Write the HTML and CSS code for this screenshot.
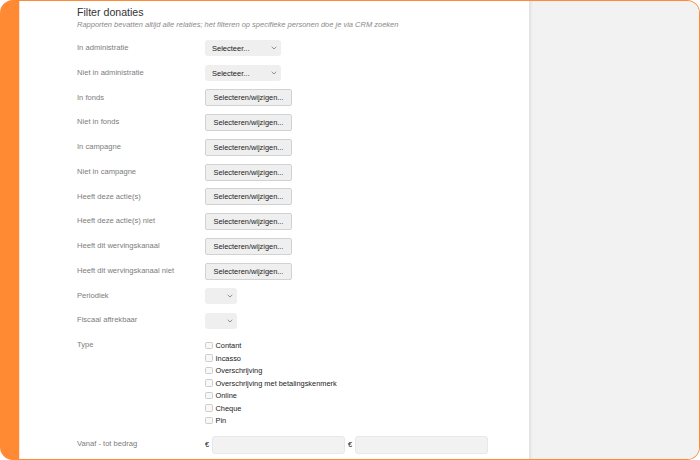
FILE: index.html
```html
<!DOCTYPE html>
<html lang="nl">
<head>
<meta charset="utf-8">
<title>Filter donaties</title>
<link rel="stylesheet" href="styles.css">
</head>
<body>
<div class="frame">
  <main class="main">
    <h1 class="title">Filter donaties</h1>
    <p class="subtitle">Rapporten bevatten altijd alle relaties; het filteren op specifieke personen doe je via CRM zoeken</p>
    <div class="form">
      <div class="row"><span class="label">In administratie</span><div class="select wide"><span>Selecteer...</span><svg class="chev" width="6" height="4" viewBox="0 0 6 4"><path d="M0.7 0.8 L3 3 L5.3 0.8" fill="none" stroke="#777" stroke-width="0.8"/></svg></div></div>
      <div class="row"><span class="label">Niet in administratie</span><div class="select wide"><span>Selecteer...</span><svg class="chev" width="6" height="4" viewBox="0 0 6 4"><path d="M0.7 0.8 L3 3 L5.3 0.8" fill="none" stroke="#777" stroke-width="0.8"/></svg></div></div>
      <div class="row"><span class="label">In fonds</span><button class="btn">Selecteren/wijzigen...</button></div>
      <div class="row"><span class="label">Niet in fonds</span><button class="btn">Selecteren/wijzigen...</button></div>
      <div class="row"><span class="label">In campagne</span><button class="btn">Selecteren/wijzigen...</button></div>
      <div class="row"><span class="label">Niet in campagne</span><button class="btn">Selecteren/wijzigen...</button></div>
      <div class="row"><span class="label">Heeft deze actie(s)</span><button class="btn">Selecteren/wijzigen...</button></div>
      <div class="row"><span class="label">Heeft deze actie(s) niet</span><button class="btn">Selecteren/wijzigen...</button></div>
      <div class="row"><span class="label">Heeft dit wervingskanaal</span><button class="btn">Selecteren/wijzigen...</button></div>
      <div class="row"><span class="label">Heeft dit wervingskanaal niet</span><button class="btn">Selecteren/wijzigen...</button></div>
      <div class="row"><span class="label">Periodiek</span><div class="select small"><svg class="chev" width="6" height="4" viewBox="0 0 6 4"><path d="M0.7 0.8 L3 3 L5.3 0.8" fill="none" stroke="#777" stroke-width="0.8"/></svg></div></div>
      <div class="row"><span class="label">Fiscaal aftrekbaar</span><div class="select small"><svg class="chev" width="6" height="4" viewBox="0 0 6 4"><path d="M0.7 0.8 L3 3 L5.3 0.8" fill="none" stroke="#777" stroke-width="0.8"/></svg></div></div>
      <div class="row row-top"><span class="label">Type</span>
        <div class="checks">
          <label class="check"><span class="box"></span>Contant</label>
          <label class="check"><span class="box"></span>Incasso</label>
          <label class="check"><span class="box"></span>Overschrijving</label>
          <label class="check"><span class="box"></span>Overschrijving met betalingskenmerk</label>
          <label class="check"><span class="box"></span>Online</label>
          <label class="check"><span class="box"></span>Cheque</label>
          <label class="check"><span class="box"></span>Pin</label>
        </div>
      </div>
      <div class="row"><span class="label">Vanaf - tot bedrag</span>
        <div class="amounts">
          <span class="euro">€</span><span class="input"></span>
          <span class="euro">€</span><span class="input"></span>
        </div>
      </div>
    </div>
  </main>
  <aside class="side"></aside>
</div>
</body>
</html>
```

FILE: styles.css
```css
html, body {
  margin: 0;
  padding: 0;
  background: #ffffff;
}
body {
  font-family: "Liberation Sans", Arial, sans-serif;
}
.frame {
  box-sizing: border-box;
  width: 700px;
  height: 460px;
  border: 1px solid #ff8a33;
  border-left: 19px solid #ff8a33;
  border-radius: 13px;
  display: flex;
  overflow: hidden;
  background: #ffffff;
}
.main {
  width: 510px;
  flex: none;
  box-sizing: border-box;
  padding: 5px 0 0 58px;
  box-shadow: inset 1px 0 0 #ffe3cc;
}
.side {
  flex: 1;
  background: #f2f2f2;
  box-shadow: inset 3px 0 3px -1px rgba(0, 0, 0, 0.07);
}
.title {
  margin: 0;
  font-size: 10.6px;
  line-height: 13px;
  font-weight: normal;
  color: #333333;
}
.subtitle {
  margin: 0.5px 0 0;
  font-size: 7.5px;
  line-height: 10px;
  font-style: italic;
  color: #8a8a8a;
}
.form {
  margin-top: 6.5px;
}
.row {
  display: grid;
  grid-template-columns: 128px auto;
  align-items: center;
  height: 24.75px;
}
.row-top {
  height: auto;
  align-items: start;
  padding: 6.3px 0 5.4px;
}
.label {
  font-size: 7.6px;
  line-height: 12.5px;
  color: #7c7c7c;
}
.select {
  box-sizing: border-box;
  height: 16px;
  background: #efefef;
  border-radius: 3px;
  display: flex;
  align-items: center;
  padding-left: 7px;
  font-size: 7.5px;
  color: #222222;
}
.select.wide { width: 76px; }
.select.small { width: 32px; }
.chev {
  margin-left: auto;
  margin-right: 4px;
}
.btn {
  box-sizing: border-box;
  width: 87px;
  height: 17px;
  padding: 0;
  background: #efefef;
  border: 1px solid #d2d2d2;
  border-radius: 2px;
  font-family: "Liberation Sans", Arial, sans-serif;
  font-size: 7.4px;
  color: #222222;
  text-align: center;
}
.checks {
  display: flex;
  flex-direction: column;
}
.check {
  display: flex;
  align-items: center;
  height: 12.5px;
  font-size: 7.4px;
  color: #222222;
}
.box {
  box-sizing: border-box;
  width: 7.5px;
  height: 7.5px;
  border: 1px solid #cccccc;
  border-radius: 1.5px;
  background: #f8f8f8;
  margin-right: 3px;
}
.amounts {
  display: flex;
  align-items: center;
}
.euro {
  font-size: 7.4px;
  color: #222222;
  width: 7px;
}
.input {
  box-sizing: border-box;
  width: 133px;
  height: 18px;
  background: #f2f2f2;
  border: 1px solid #e8e8e8;
  border-radius: 3px;
  margin-right: 3px;
}
```
